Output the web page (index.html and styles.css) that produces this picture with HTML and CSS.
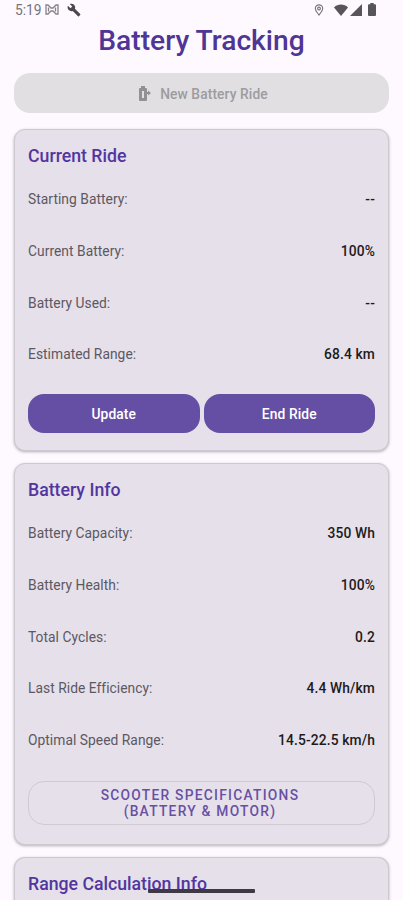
FILE: index.html
```html
<!DOCTYPE html>
<html lang="en">
<head>
    <meta charset="UTF-8">
    <meta name="viewport" content="width=device-width, initial-scale=1.0">
    <title>Battery Tracking</title>
    <link rel="stylesheet" href="styles.css">
</head>
<body>

    <div class="status-bar">
        <div class="status-left">
            <span class="clock">5:19</span>
            <svg class="icon-cast" width="14" height="11" viewBox="0 0 14 11" fill="none" stroke="#858188" stroke-width="1.3">
                <path d="M1 1H3L6 4H8L11 1H13V10H11L8 7H6L3 10H1Z"/>
                <path d="M3.5 3.5V7.5M10.5 3.5V7.5"/>
            </svg>
            <svg class="icon-wrench" width="14" height="14" viewBox="0 0 24 24" fill="#4b484e">
                <path d="M22.7 19l-9.1-9.1c.9-2.3.4-5-1.5-6.9-2-2-5-2.4-7.4-1.3L9 6 6 9 1.6 4.7C.4 7.1.9 10.1 2.9 12.1c1.9 1.9 4.6 2.4 6.9 1.5l9.1 9.1c.4.4 1 .4 1.4 0l2.3-2.3c.5-.4.5-1.1.1-1.4z"/>
            </svg>
        </div>
        <div class="status-right">
            <svg class="icon-pin" width="10" height="12" viewBox="0 0 10 13" fill="none" stroke="#77737a" stroke-width="1.2">
                <path d="M5 12C3.5 9.5 1 7.5 1 4.9a4 4 0 0 1 8 0C9 7.5 6.5 9.5 5 12Z"/>
                <circle cx="5" cy="4.9" r="1.5"/>
            </svg>
            <svg class="icon-wifi" width="14" height="12" viewBox="0 0 14 12" fill="#57545a">
                <path d="M7 12L0 3.4C2 1.4 4.4 0.5 7 0.5s5 0.9 7 2.9Z"/>
            </svg>
            <svg class="icon-signal" width="12" height="12" viewBox="0 0 12 12" fill="#57545a">
                <path d="M0 12L12 0V12Z"/>
            </svg>
            <svg class="icon-battery" width="8" height="13" viewBox="0 0 8 13" fill="#57545a">
                <path d="M2.3 0H5.7V1.3H7Q8 1.3 8 2.3V12Q8 13 7 13H1Q0 13 0 12V2.3Q0 1.3 1 1.3H2.3Z"/>
            </svg>
        </div>
    </div>

    <h1 class="page-title">Battery Tracking</h1>

    <div class="container">
        <button class="new-ride" disabled>
            <svg width="12" height="15" viewBox="0 0 12 15" fill="#919093">
                <path fill-rule="evenodd" d="M0 3Q0 2 1 2H2V0H6V2H7Q8 2 8 3V6H9V4.5L12 7L9 9.5V8H8V14Q8 15 7 15H1Q0 15 0 14ZM3 5V12H5V5Z"/>
            </svg>
            New Battery Ride
        </button>

        <div class="card">
            <h2>Current Ride</h2>
            <div class="row"><span class="label">Starting Battery:</span><span class="value">--</span></div>
            <div class="row"><span class="label">Current Battery:</span><span class="value">100%</span></div>
            <div class="row"><span class="label">Battery Used:</span><span class="value">--</span></div>
            <div class="row"><span class="label">Estimated Range:</span><span class="value">68.4 km</span></div>
            <div class="actions">
                <button class="filled">Update</button>
                <button class="filled">End Ride</button>
            </div>
        </div>

        <div class="card card-info">
            <h2>Battery Info</h2>
            <div class="row"><span class="label">Battery Capacity:</span><span class="value">350 Wh</span></div>
            <div class="row"><span class="label">Battery Health:</span><span class="value">100%</span></div>
            <div class="row"><span class="label">Total Cycles:</span><span class="value">0.2</span></div>
            <div class="row"><span class="label">Last Ride Efficiency:</span><span class="value">4.4 Wh/km</span></div>
            <div class="row"><span class="label">Optimal Speed Range:</span><span class="value">14.5-22.5 km/h</span></div>
            <button class="outlined">SCOOTER SPECIFICATIONS<br>(BATTERY &amp; MOTOR)</button>
        </div>

        <div class="card card-range">
            <h2>Range Calculation Info</h2>
        </div>
    </div>

    <div class="home-bar"></div>

</body>
</html>
```
FILE: styles.css
```css
* {
    box-sizing: border-box;
}
body {
    margin: 0;
    height: 900px;
    overflow: hidden;
    position: relative;
    font-family: Roboto, sans-serif;
    background: #fef9fe;
    color: #1d1b20;
}
button {
    font-family: inherit;
    border: none;
    padding: 0;
    border-radius: 16px;
}
.status-bar {
    display: flex;
    justify-content: space-between;
    height: 20px;
    padding: 0 27px 0 15px;
}
.status-left,
.status-right {
    display: flex;
    align-items: center;
    height: 19px;
}
.clock {
    width: 30px;
    font-size: 13.8px;
    color: #77747a;
}
.icon-wrench {
    margin-left: 8px;
}
.icon-wifi {
    margin-left: 10px;
}
.icon-signal {
    margin-left: 2px;
}
.icon-battery {
    margin-left: 6px;
}
.page-title {
    margin: 0;
    height: 53px;
    line-height: 41px;
    text-align: center;
    font-size: 28.2px;
    font-weight: 500;
    color: #4f3595;
}
.container {
    padding: 0 14px;
}
.new-ride {
    display: flex;
    align-items: center;
    justify-content: center;
    gap: 9px;
    width: 100%;
    height: 40px;
    margin-bottom: 16px;
    padding: 1px 0 0 4px;
    font-size: 13.8px;
    font-weight: 500;
    letter-spacing: 0.1px;
    color: #9d9b9f;
    background: #e1dfe2;
}
.card {
    height: 322px;
    margin-bottom: 12px;
    padding: 8px 13px 0;
    border: 1px solid #cdc8d1;
    border-radius: 11px;
    background: #e6e0ea;
    box-shadow: 0 1px 3px rgba(0, 0, 0, 0.3);
}
.card-info {
    height: 382px;
}
/* last card is cut off by the bottom of the screen */
.card-range {
    height: 43px;
    margin-bottom: 0;
    border-bottom: none;
    border-radius: 11px 11px 0 0;
}
.card h2 {
    margin: 0;
    height: 35.5px;
    line-height: 36px;
    font-size: 17.7px;
    font-weight: 500;
    color: #5236a0;
}
.card-range h2 {
    height: 34px;
}
.row {
    display: flex;
    justify-content: space-between;
    align-items: center;
    height: 51.7px;
    font-size: 13.8px;
}
.label {
    letter-spacing: 0.04px;
    color: #5c5862;
}
.value {
    font-weight: 500;
    letter-spacing: 0.13px;
}
.actions {
    display: flex;
    gap: 4px;
    margin-top: 14px;
}
.filled {
    flex: 1;
    height: 39px;
    font-size: 13.8px;
    font-weight: 500;
    letter-spacing: 0.1px;
    color: #fff;
    background: #654fa4;
}
.outlined {
    width: 100%;
    height: 44px;
    margin-top: 15px;
    padding: 1px 3px 0 0;
    border: 1px solid #d0cad6;
    background: none;
    font-size: 13.8px;
    font-weight: 500;
    line-height: 16px;
    letter-spacing: 1.25px;
    color: #6750a4;
}
/* gesture handle on top of the page */
.home-bar {
    position: absolute;
    left: 148px;
    bottom: 7px;
    width: 107px;
    height: 4px;
    border-radius: 1px;
    background: #3e3944;
}
```
